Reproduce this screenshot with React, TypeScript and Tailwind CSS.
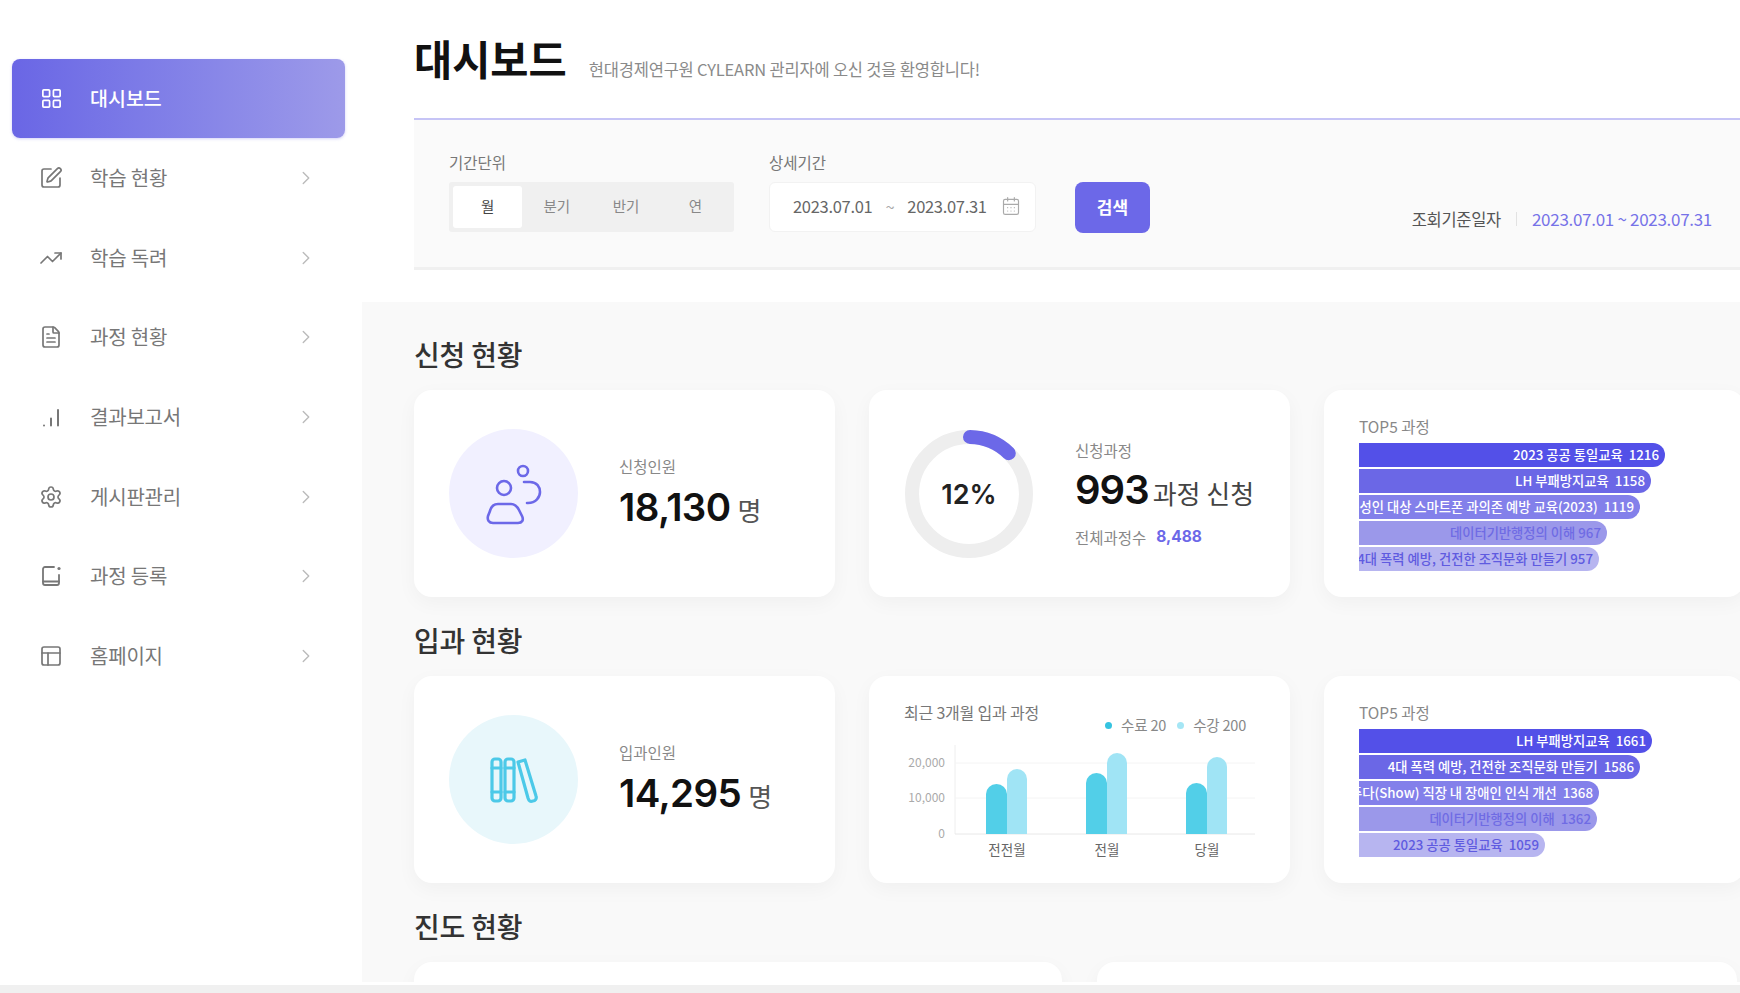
// App.tsx
import {
  CalendarDays,
  ChevronRight,
  FileText,
  LayoutGrid,
  PanelsTopLeft,
  Settings,
  SquarePen,
  TrendingUp,
} from 'lucide-react'
import type { ReactNode } from 'react'

function BarsIcon() {
  return (
    <svg width="24" height="24" viewBox="0 0 24 24" fill="none" stroke="currentColor" strokeWidth="2" strokeLinecap="round">
      <path d="M5 20.5h.01M12 20.5v-7M19 20.5V5" />
    </svg>
  )
}

function CourseAddIcon() {
  return (
    <svg width="24" height="24" viewBox="0 0 24 24" fill="none" stroke="currentColor" strokeWidth="1.8" strokeLinecap="round" strokeLinejoin="round">
      <path d="M15 3H6a2 2 0 0 0-2 2v14a2 2 0 0 0 2 2h12a2 2 0 0 0 2-2v-8" />
      <path d="M4 17.5h16" />
      <circle cx="20" cy="4.5" r="1.6" fill="currentColor" stroke="none" />
    </svg>
  )
}

const menu = [
  { label: '학습 현황', icon: <SquarePen size={24} strokeWidth={1.7} /> },
  { label: '학습 독려', icon: <TrendingUp size={26} strokeWidth={1.7} /> },
  { label: '과정 현황', icon: <FileText size={24} strokeWidth={1.7} /> },
  { label: '결과보고서', icon: <BarsIcon /> },
  { label: '게시판관리', icon: <Settings size={26} strokeWidth={1.7} /> },
  { label: '과정 등록', icon: <CourseAddIcon /> },
  { label: '홈페이지', icon: <PanelsTopLeft size={24} strokeWidth={1.7} /> },
]

const applyBars = [
  { label: '2023 공공 통일교육  1216', cls: 'w-[306px] bg-[#5350e8] text-white' },
  { label: 'LH 부패방지교육  1158', cls: 'w-[292px] bg-[#6b67e6] text-white' },
  { label: '성인 대상 스마트폰 과의존 예방 교육(2023)  1119', cls: 'w-[281px] bg-[#8380ea] text-white' },
  { label: '데이터기반행정의 이해 967', cls: 'w-[248px] bg-[#9b98ea] text-[#6f6be4]' },
  { label: '4대 폭력 예방, 건전한 조직문화 만들기 957', cls: 'w-[240px] bg-[#b7b5f0] text-[#5f5be0]' },
]

const enterBars = [
  { label: 'LH 부패방지교육  1661', cls: 'w-[293px] bg-[#5350e8] text-white' },
  { label: '4대 폭력 예방, 건전한 조직문화 만들기  1586', cls: 'w-[281px] bg-[#6b67e6] text-white' },
  { label: '보여주다(Show) 직장 내 장애인 인식 개선  1368', cls: 'w-[240px] bg-[#8380ea] text-white' },
  { label: '데이터기반행정의 이해  1362', cls: 'w-[238px] bg-[#9b98ea] text-[#6f6be4]' },
  { label: '2023 공공 통일교육  1059', cls: 'w-[186px] bg-[#b7b5f0] text-[#5f5be0]' },
]

function Card({ children, className = '' }: { children: ReactNode; className?: string }) {
  return (
    <div className={`bg-white rounded-[18px] shadow-[0_6px_20px_rgba(0,0,0,0.04)] shrink-0 ${className}`}>
      {children}
    </div>
  )
}

function SectionTitle({ children }: { children: ReactNode }) {
  return <h2 className="h-[40px] mb-[16px] text-[28px] leading-[40px] font-medium text-[#333] tracking-[-0.2px]">{children}</h2>
}

function TopBars({ bars }: { bars: { label: string; cls: string }[] }) {
  return (
    <Card className="w-[421px] h-[207px] pt-[26px] pl-[35px]">
      <p className="text-[15.5px] leading-[20px] text-[#888] mb-[7px]">TOP5 과정</p>
      <div className="flex flex-col gap-[2px]">
        {bars.map(bar => (
          <div
            key={bar.label}
            className={`h-[24px] rounded-r-full flex items-center justify-end overflow-hidden pr-[6px] ${bar.cls}`}
          >
            <span className="shrink-0 whitespace-pre text-[13.3px] font-medium">{bar.label}</span>
          </div>
        ))}
      </div>
    </Card>
  )
}

function StatCard({ circle, icon, label, value }: { circle: string; icon: ReactNode; label: string; value: string }) {
  return (
    <Card className="w-[421px] h-[207px] pl-[35px] flex items-center gap-[41px]">
      <div className={`w-[129px] h-[129px] rounded-full flex items-center justify-center ${circle}`}>{icon}</div>
      <div>
        <p className="text-[15.5px] leading-[20px] text-[#888] mb-[9px]">{label}</p>
        <p className="flex items-baseline gap-[7px] leading-[44px]">
          <span className="text-[38.5px] font-semibold text-[#111] tracking-[-0.6px] font-['Inter',sans-serif]">{value}</span>
          <span className="text-[26px] text-[#555]">명</span>
        </p>
      </div>
    </Card>
  )
}

function PeopleIcon() {
  return (
    <svg width="56" height="62" viewBox="0 0 56 62" fill="none" stroke="#6c68e8" strokeWidth="2.6" strokeLinecap="round" strokeLinejoin="round">
      <circle cx="37" cy="8" r="5" />
      <circle cx="18" cy="25" r="7" />
      <path d="M38 19h6c7 0 10 5 10 10s-4 11-12 11h-1" />
      <path d="M12 41h13c4 0 6 2 8 6l3 6c2 4 0 7-4 7H7c-4 0-6-3-5-7l2-5c1-4 4-7 8-7z" />
    </svg>
  )
}

function BooksIcon() {
  return (
    <svg width="48" height="48" viewBox="0 0 48 48" fill="none" stroke="#4cc9e8" strokeWidth="3.2" strokeLinecap="round" strokeLinejoin="round">
      <rect x="2" y="3" width="9" height="42" rx="3" />
      <rect x="15" y="3" width="9" height="42" rx="3" />
      <path d="M28 6l7-2 11 36c1 3-1 5-3 5-3 1-4 0-5-3z" />
      <path d="M2 12h9M15 12h9M2 36h9M15 36h9" />
    </svg>
  )
}

function Donut() {
  return (
    <svg width="130" height="130" viewBox="0 0 130 130" className="shrink-0">
      <circle cx="65" cy="65" r="57" fill="none" stroke="#eeeeee" strokeWidth="14" />
      <circle
        cx="65"
        cy="65"
        r="57"
        fill="none"
        stroke="#6c68e8"
        strokeWidth="14"
        strokeLinecap="round"
        strokeDasharray="43 358"
        transform="rotate(-89 65 65)"
      />
      <text x="65" y="75" textAnchor="middle" fontSize="27" fontWeight="600" fontFamily="Inter, sans-serif" fill="#222">12%</text>
    </svg>
  )
}

function MonthChart() {
  const groups = [
    { x: 103, label: '전전월', a: 50, b: 65 },
    { x: 203, label: '전월', a: 61, b: 81 },
    { x: 303, label: '당월', a: 51, b: 77 },
  ]
  return (
    <svg width="386" height="140" viewBox="0 0 386 140" className="block">
      <path d="M51 20v89" stroke="#eeeeee" />
      <path d="M51 38h300M51 73h300" stroke="#f4f4f4" />
      <path d="M51 109h300" stroke="#e8e8e8" />
      <text x="41" y="42" textAnchor="end" fontSize="12" fill="#aaa">20,000</text>
      <text x="41" y="77" textAnchor="end" fontSize="12" fill="#aaa">10,000</text>
      <text x="41" y="113" textAnchor="end" fontSize="12" fill="#aaa">0</text>
      {groups.map(g => (
        <g key={g.label}>
          <path d={`M${g.x - 21} 109V${109 - g.a + 10}a10.5 10 0 0 1 21 0V109z`} fill="#52cfe8" />
          <path d={`M${g.x} 109V${109 - g.b + 10}a10 10 0 0 1 20 0V109z`} fill="#a0e4f5" />
          <text x={g.x} y="130" textAnchor="middle" fontSize="13.5" fill="#666">{g.label}</text>
        </g>
      ))}
    </svg>
  )
}

export default function App() {
  return (
    <div className="h-screen w-full overflow-hidden flex flex-col bg-white font-['Noto_Sans_CJK_KR','Noto_Sans',sans-serif]">
      <div className="flex-1 min-h-0 flex">

        {/* Sidebar */}
        <aside className="w-[362px] shrink-0 bg-white pt-[59px] pl-[12px] pr-[17px]">
          <div className="h-[79px] rounded-[8px] bg-gradient-to-r from-[#6a66e5] to-[#9d9ae9] flex items-center pl-[28px] pb-[1px] gap-[27px] text-white shadow-[0_1px_3px_rgba(108,104,232,0.3)]">
            <LayoutGrid size={23} strokeWidth={1.8} />
            <span className="text-[19.5px] font-medium">대시보드</span>
          </div>
          {menu.map(item => (
            <div key={item.label} className="h-[79.7px] flex items-center text-[#777]">
              <span className="w-[24px] ml-[27px] flex justify-center">{item.icon}</span>
              <span className="ml-[27px] text-[20px] flex-1 tracking-[-0.2px]">{item.label}</span>
              <ChevronRight size={22} strokeWidth={1.5} className="text-[#bbb] mr-[28px]" />
            </div>
          ))}
        </aside>

        <main className="flex-1 min-w-0 bg-[#f9f9f9] overflow-hidden">

          {/* Header */}
          <div className="bg-white h-[302px] pl-[52px]">
            <div className="h-[120px] border-b-2 border-[#c6c4f6] pt-[31px] flex items-start">
              <h1 className="text-[41.5px] leading-[54px] font-bold text-[#111] mr-[22px]">대시보드</h1>
              <p className="mt-[26px] text-[16.5px] leading-[24px] tracking-[-0.2px] text-[#8a8a8a]">
                현대경제연구원 CYLEARN 관리자에 오신 것을 환영합니다!
              </p>
            </div>

            {/* Filter */}
            <div className="h-[150px] bg-[#fafafa] border-b-[3px] border-[#f0f0f0] pt-[32px] pl-[35px] pr-[28px] flex items-start">
              <div className="w-[285px] mr-[35px]">
                <p className="text-[15.5px] leading-[20px] text-[#777] mb-[10px]">기간단위</p>
                <div className="h-[50px] bg-[#f0f0f0] rounded-[3px] p-[4px] flex text-[14.5px] text-[#888]">
                  <span className="w-[70px] bg-white rounded-[3px] flex items-center justify-center text-[#444] pb-[2px]">월</span>
                  <span className="w-[70px] flex items-center justify-center pb-[2px]">분기</span>
                  <span className="w-[70px] flex items-center justify-center pb-[2px]">반기</span>
                  <span className="w-[70px] flex items-center justify-center pb-[2px]">연</span>
                </div>
              </div>
              <div className="w-[267px] mr-[39px]">
                <p className="text-[15.5px] leading-[20px] text-[#777] mb-[10px]">상세기간</p>
                <div className="h-[50px] bg-white border border-[#f2f2f2] rounded-[6px] flex items-center pl-[23px] pb-[2px] text-[16.5px] text-[#666] tracking-[-0.3px]">
                  <span>2023.07.01</span>
                  <span className="mx-[13px] text-[#aaa]">~</span>
                  <span>2023.07.31</span>
                  <CalendarDays size={20} strokeWidth={1.4} className="ml-[14px] text-[#aaa]" />
                </div>
              </div>
              <button className="mt-[30px] w-[75px] h-[51px] rounded-[8px] bg-[#6c68e8] text-white text-[17px] font-bold pb-[2px]">
                검색
              </button>
              <div className="ml-auto mt-[56px] flex items-center text-[17px] leading-[22px] tracking-[-0.3px]">
                <span className="text-[#555] text-[16.5px]">조회기준일자</span>
                <span className="mx-[15px] h-[14px] w-px bg-[#e2e2e2]" />
                <span className="text-[#7672e8]">2023.07.01 ~ 2023.07.31</span>
              </div>
            </div>
          </div>

          {/* Content */}
          <div className="pl-[52px] pt-[32px]">
            <SectionTitle>신청 현황</SectionTitle>
            <div className="flex gap-[34px] mb-[23px]">
              <StatCard circle="bg-[#f1f0ff]" icon={<PeopleIcon />} label="신청인원" value="18,130" />
              <Card className="w-[421px] h-[207px] pl-[35px] flex items-center gap-[41px]">
                <Donut />
                <div>
                  <p className="text-[15.5px] leading-[20px] text-[#888] mb-[7px]">신청과정</p>
                  <p className="flex items-baseline gap-[4px] leading-[46px]">
                    <span className="text-[40px] font-semibold text-[#111] tracking-[-1px] font-['Inter',sans-serif]">993</span>
                    <span className="text-[26px] text-[#444]">과정 신청</span>
                  </p>
                  <p className="mt-[11px] flex items-center gap-[10px] text-[15.5px] leading-[20px] text-[#888]">
                    전체과정수
                    <span className="font-bold text-[#6c68e8] font-['Inter',sans-serif]">8,488</span>
                  </p>
                </div>
              </Card>
              <TopBars bars={applyBars} />
            </div>

            <SectionTitle>입과 현황</SectionTitle>
            <div className="flex gap-[34px] mb-[23px]">
              <StatCard circle="bg-[#e8f7fb]" icon={<BooksIcon />} label="입과인원" value="14,295" />
              <Card className="w-[421px] h-[207px] pt-[26px] pl-[35px]">
                <div className="flex items-start pr-[44px]">
                  <p className="text-[16px] leading-[20px] text-[#777] tracking-[-0.2px]">최근 3개월 입과 과정</p>
                  <div className="ml-auto mt-[13px] flex items-center text-[14.5px] leading-[20px] text-[#888] tracking-[-0.2px]">
                    <span className="w-[7px] h-[7px] rounded-full bg-[#35c3e0] mr-[9px]" />
                    수료 20
                    <span className="w-[7px] h-[7px] rounded-full bg-[#a5e6f5] ml-[11px] mr-[9px]" />
                    수강 200
                  </div>
                </div>
                <div className="mt-[-10px]">
                  <MonthChart />
                </div>
              </Card>
              <TopBars bars={enterBars} />
            </div>

            <SectionTitle>진도 현황</SectionTitle>
            <div className="flex gap-[35px]">
              <Card className="w-[648px] h-[207px]"><span /></Card>
              <Card className="w-[640px] h-[207px]"><span /></Card>
            </div>
          </div>
        </main>
      </div>

      {/* Bottom scrollbar track */}
      <div className="h-[3px] shrink-0 bg-white" />
      <div className="h-[8px] shrink-0 bg-[#f0f0f0]" />
    </div>
  )
}
